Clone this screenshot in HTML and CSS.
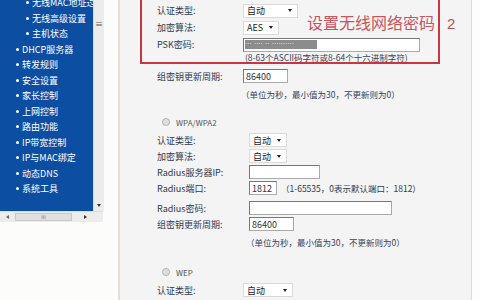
FILE: index.html
```html
<!DOCTYPE html>
<html>
<head>
<meta charset="utf-8">
<title>无线网络安全设置</title>
<link rel="stylesheet" href="styles.css">
</head>
<body>
<div id="frame">

  <div id="side">
    <div class="side-top">
      <div class="menu">
        <ul>
          <li class="sub">无线MAC地址过滤</li>
          <li class="sub">无线高级设置</li>
          <li class="sub">主机状态</li>
          <li>DHCP服务器</li>
          <li>转发规则</li>
          <li>安全设置</li>
          <li>家长控制</li>
          <li>上网控制</li>
          <li>路由功能</li>
          <li>IP带宽控制</li>
          <li>IP与MAC绑定</li>
          <li>动态DNS</li>
          <li>系统工具</li>
        </ul>
      </div>
      <div class="vscroll">
        <span class="grip">≡</span>
        <span class="arr-down"></span>
      </div>
    </div>
    <div class="hscroll">
      <span class="arr-left"></span>
      <span class="thumb">III</span>
      <span class="arr-right"></span>
    </div>
  </div>

  <div id="main">

    <div class="mark">
      <div class="row">
        <span class="lbl">认证类型:</span>
        <span class="sel w55">自动<i></i></span>
      </div>
      <div class="row">
        <span class="lbl">加密算法:</span>
        <span class="sel w36">AES<i></i></span>
      </div>
      <div class="row">
        <span class="lbl">PSK密码:</span>
        <span class="inp w177"><b class="blur">··· ···· ·· ··········</b></span>
      </div>
      <div class="hint in-box">(8-63个ASCII码字符或8-64个十六进制字符)</div>

      <div class="note">设置无线网络密码</div>
      <div class="num">2</div>
    </div>

    <div class="sect">
      <div class="row gap">
        <span class="lbl">组密钥更新周期:</span>
        <span class="inp w45">86400</span>
      </div>
      <div class="hint">（单位为秒，最小值为30，不更新则为0）</div>
    </div>

    <div class="sect wpa">
      <div class="radio-row"><span class="radio"></span>WPA/WPA2</div>
      <div class="row first">
        <span class="lbl">认证类型:</span>
        <span class="sel w38">自动<i></i></span>
      </div>
      <div class="row">
        <span class="lbl">加密算法:</span>
        <span class="sel w38">自动<i></i></span>
      </div>
      <div class="row">
        <span class="lbl">Radius服务器IP:</span>
        <span class="inp w71"></span>
      </div>
      <div class="row">
        <span class="lbl">Radius端口:</span>
        <span class="ctl"><span class="inp w28">1812</span><span class="tip">（1-65535，0表示默认端口：1812）</span></span>
      </div>
      <div class="row gap">
        <span class="lbl">Radius密码:</span>
        <span class="inp w143"></span>
      </div>
      <div class="row">
        <span class="lbl">组密钥更新周期:</span>
        <span class="inp w45">86400</span>
      </div>
      <div class="hint">（单位为秒，最小值为30，不更新则为0）</div>
    </div>

    <div class="sect wep">
      <div class="radio-row"><span class="radio"></span>WEP</div>
      <div class="row first">
        <span class="lbl">认证类型:</span>
        <span class="sel w50">自动<i></i></span>
      </div>
    </div>

  </div>

  <div id="edge"></div>
</div>
</body>
</html>
```

FILE: styles.css
```css
body {margin:0; width:480px; height:300px; overflow:hidden; background:#fcfcfa; font:9px "Noto Sans CJK SC", sans-serif; color:#2e3a52;}
#frame {display:flex; height:300px;}

/* left menu frame */
#side {width:118px; flex:none; background:#fcfcfa;}
.side-top {display:flex; height:211px;}
.menu {width:93px; background:#0c4ea2; overflow:hidden;}
.menu ul {margin:-5px 0 0 0; padding:0; list-style:none;}
.menu li {position:relative; height:15.5px; line-height:15.5px; padding-left:22px; color:#fff; white-space:nowrap;}
.menu li:before {content:""; position:absolute; left:16px; top:6px; width:3px; height:3px; border-radius:50%; background:#fff;}
.menu li.sub {padding-left:32px;}
.menu li.sub:before {left:26px;}
.vscroll {width:10px; background:#ececec; border-left:1px solid #dadada; display:flex; flex-direction:column; justify-content:space-between; align-items:center; padding:20px 0 4px;}
.grip {font-size:8px; line-height:8px; color:#555;}
.arr-down {border-left:2.5px solid transparent; border-right:2.5px solid transparent; border-top:3px solid #333;}
.hscroll {width:103px; height:11px; background:#ececec; border-top:1px solid #dcdcdc; display:flex; align-items:center; padding:0 6px; box-sizing:border-box;}
.arr-left {border-top:2.5px solid transparent; border-bottom:2.5px solid transparent; border-right:3px solid #666;}
.arr-right {border-top:2.5px solid transparent; border-bottom:2.5px solid transparent; border-left:3px solid #333; margin-left:12px;}
.thumb {width:57px; height:8px; margin-left:6px; background:#e0e0e0; border:1px solid #c9c9c9; box-sizing:border-box; font:5px/6px "DejaVu Sans", sans-serif; color:#777; text-align:center;}

/* settings page */
#main {width:354px; flex:none; box-sizing:border-box; background:#f4f4f4; border-left:2px solid #e8dcd2; border-right:1px solid #e4dccb; padding-left:20px;}
#edge {flex:1; background:#fdfdfb;}

.mark {position:relative; width:300px; box-sizing:border-box; padding:2px 0 0 15px; border:2px solid #c8363f; border-top:none;}
.row {display:grid; grid-template-columns:86px auto; align-items:center; height:17px;}
.lbl {white-space:nowrap;}
.hint {margin-left:84px; height:12px; line-height:12px; white-space:nowrap; color:#34435e; font-size:8.5px;}
.hint.in-box {margin-left:88px; height:9px; line-height:8px; font-size:8.5px;}
.note {position:absolute; left:165px; top:12px; font-size:16px; line-height:20px; color:#c9545d; white-space:nowrap;}
.num {position:absolute; left:305px; top:14px; font:15px/20px "Liberation Sans", sans-serif; color:#c0504d;}

.sect {padding-left:17px;}
.sect .row {height:16px;}
.sect .row.gap {margin-top:4px;}
.sect .hint {margin-top:4px;}
.wpa .row {grid-template-columns:92px auto;}
.wpa .hint {margin-left:89px;}
.wpa {margin-top:14px;}
.wep {margin-top:16px;}
.sect .row.first {margin-top:2px;}
.radio-row {display:flex; align-items:center; height:16px; padding-left:5px; font-size:8px; color:#555;}
.radio {width:8px; height:8px; margin-right:6px; border-radius:50%; border:1px solid #b4b4b4; background:#dedede; box-sizing:border-box;}

/* form controls */
.sel {display:flex; justify-content:space-between; align-items:center; box-sizing:border-box; height:14px; padding:0 5px 0 3px; background:#fff; border:1px solid #dadada; color:#222;}
.sel i {border-left:2.5px solid transparent; border-right:2.5px solid transparent; border-top:3px solid #222;}
.inp {display:flex; align-items:center; box-sizing:border-box; height:14px; padding-left:2px; background:#fff; border:1px solid #777; border-right-color:#aaa; border-bottom-color:#aaa; color:#333;}
.blur {display:block; width:72px; height:9px; margin-left:-1px; background:#8c8c8c; color:#eee; font:7px/9px "DejaVu Sans", sans-serif; overflow:hidden; white-space:nowrap;}
.ctl {display:flex; align-items:center; gap:8px;}
.tip {white-space:nowrap; font-size:8.5px; margin-left:-4px;}
.w28 {width:28px;} .w36 {width:36px;} .w38 {width:38px;} .w45 {width:45px;} .w50 {width:50px;}
.w55 {width:55px;} .w71 {width:71px;} .w143 {width:143px;} .w177 {width:177px;}
```
